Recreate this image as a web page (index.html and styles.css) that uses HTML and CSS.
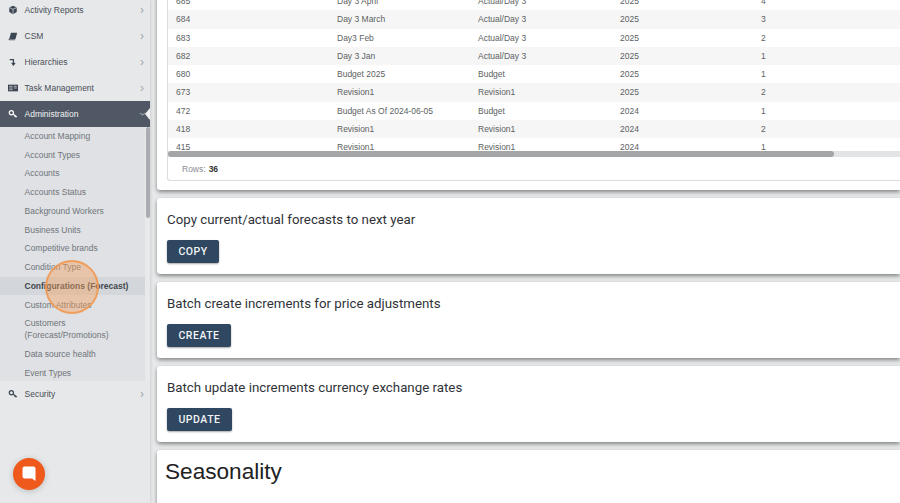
FILE: index.html
```html
<!DOCTYPE html>
<html lang="en">
<head>
    <meta charset="UTF-8">
    <title>Configurations (Forecast)</title>
    <link rel="stylesheet" href="styles.css">
</head>
<body>
    <div class="shell">
        <aside class="sidebar">
            <ul class="menu">
                <li class="menu-item">
                    <svg class="menu-icon" viewBox="0 0 12 12"><path d="M6 1l4.500 2v5.500L6 11 1.500 8.500V3z" fill="#3c4552"/><path d="M1.500 3L6 5.200 10.500 3M6 5.200V11" stroke="#e6e8ea" stroke-width=".8" fill="none"/></svg>
                    <span>Activity Reports</span><span class="chev">&#8250;</span>
                </li>
                <li class="menu-item">
                    <svg class="menu-icon" viewBox="0 0 12 12"><path d="M3.500 2H11L9 9.500H1.500z" fill="#3c4552"/><path d="M1.500 9.500L1 10.500h7.500" stroke="#3c4552" fill="none"/></svg>
                    <span>CSM</span><span class="chev">&#8250;</span>
                </li>
                <li class="menu-item">
                    <svg class="menu-icon" viewBox="0 0 12 12"><path d="M3 3h4.500v5.500M5.500 7l2 2.500 2-2.500" stroke="#3c4552" stroke-width="1.500" fill="none" transform="translate(-1 0)"/></svg>
                    <span>Hierarchies</span><span class="chev">&#8250;</span>
                </li>
                <li class="menu-item">
                    <svg class="menu-icon" viewBox="0 0 12 12"><path d="M0 2h12v8H0z" fill="#3c4552"/><path d="M1.500 4h4M7 4h3.500M1.500 6h4M7 6h3.500M1.500 8h4" stroke="#e6e8ea" stroke-width=".8"/></svg>
                    <span>Task Management</span><span class="chev">&#8250;</span>
                </li>
                <li class="menu-item menu-item-active">
                    <svg class="menu-icon" viewBox="0 0 12 12"><circle cx="4" cy="4.500" r="2.500" fill="none" stroke="#fff" stroke-width="1.400"/><path d="M6 6l4.500 3.500M8.500 8v2" stroke="#fff" stroke-width="1.400" fill="none"/></svg>
                    <span>Administration</span><span class="chev chev-open">&#8250;</span>
                    <span class="active-notch"></span>
                </li>
                <li class="submenu-wrap">
                    <ul class="submenu">
                        <li>Account Mapping</li>
                        <li>Account Types</li>
                        <li>Accounts</li>
                        <li>Accounts Status</li>
                        <li>Background Workers</li>
                        <li>Business Units</li>
                        <li>Competitive brands</li>
                        <li>Condition Type</li>
                        <li class="current">Configurations (Forecast)</li>
                        <li>Custom Attributes</li>
                        <li class="two-lines">Customers (Forecast/Promotions)</li>
                        <li>Data source health</li>
                        <li>Event Types</li>
                    </ul>
                    <span class="submenu-track"><span class="submenu-thumb"></span></span>
                </li>
                <li class="menu-item">
                    <svg class="menu-icon" viewBox="0 0 12 12"><circle cx="4" cy="4.500" r="2.500" fill="none" stroke="#3c4552" stroke-width="1.400"/><path d="M6 6l4.500 3.500M8.500 8v2" stroke="#3c4552" stroke-width="1.400" fill="none"/></svg>
                    <span>Security</span><span class="chev">&#8250;</span>
                </li>
            </ul>
        </aside>

        <main class="content">
            <section class="card card-table">
                <div class="table-box">
                    <div class="table-scroll">
                        <table class="data-table">
                            <tbody>
                                <tr><td>685</td><td>Day 3 April</td><td>Actual/Day 3</td><td>2025</td><td>4</td></tr>
                                <tr><td>684</td><td>Day 3 March</td><td>Actual/Day 3</td><td>2025</td><td>3</td></tr>
                                <tr><td>683</td><td>Day3 Feb</td><td>Actual/Day 3</td><td>2025</td><td>2</td></tr>
                                <tr><td>682</td><td>Day 3 Jan</td><td>Actual/Day 3</td><td>2025</td><td>1</td></tr>
                                <tr><td>680</td><td>Budget 2025</td><td>Budget</td><td>2025</td><td>1</td></tr>
                                <tr><td>673</td><td>Revision1</td><td>Revision1</td><td>2025</td><td>2</td></tr>
                                <tr><td>472</td><td>Budget As Of 2024-06-05</td><td>Budget</td><td>2024</td><td>1</td></tr>
                                <tr><td>418</td><td>Revision1</td><td>Revision1</td><td>2024</td><td>2</td></tr>
                                <tr><td>415</td><td>Revision1</td><td>Revision1</td><td>2024</td><td>1</td></tr>
                            </tbody>
                        </table>
                        <div class="hscroll"><div class="hscroll-thumb"></div></div>
                    </div>
                    <div class="table-footer">Rows: <b>36</b></div>
                </div>
            </section>

            <section class="card">
                <h3 class="card-title">Copy current/actual forecasts to next year</h3>
                <button class="btn">Copy</button>
            </section>
            <section class="card">
                <h3 class="card-title">Batch create increments for price adjustments</h3>
                <button class="btn">Create</button>
            </section>
            <section class="card">
                <h3 class="card-title">Batch update increments currency exchange rates</h3>
                <button class="btn">Update</button>
            </section>
            <section class="card card-last">
                <h2 class="section-title">Seasonality</h2>
            </section>
        </main>

        <div class="click-ring"></div>
        <div class="chat-bubble">
            <svg viewBox="0 0 14 16" width="14" height="16"><path d="M2.500 .5h9a2 2 0 0 1 2 2V15l-3.500-2.500H2.500a2 2 0 0 1-2-2v-8a2 2 0 0 1 2-2z" fill="#fff"/></svg>
        </div>
    </div>
</body>
</html>
```

FILE: styles.css
```css
* {
    margin: 0;
    padding: 0;
    box-sizing: border-box;
}

html, body {
    height: 100%;
    overflow: hidden;
}

body {
    font-family: 'Liberation Sans', Arial, sans-serif;
    background: #e9eaeb;
}

.shell {
    position: relative;
    display: flex;
    height: 503px;
    overflow: hidden;
}

/* sidebar */
.sidebar {
    width: 150px;
    flex-shrink: 0;
    background: #e6e8ea;
    box-shadow: 1px 0 3px rgba(0, 0, 0, 0.12);
    z-index: 1;
}

.menu {
    list-style: none;
    margin-top: -3px;
}

.menu-item {
    position: relative;
    display: flex;
    align-items: center;
    height: 26px;
    padding-left: 8px;
    font-size: 8.500px;
    color: #4a4f57;
}

.menu-icon {
    width: 10px;
    height: 10px;
    margin-right: 6.500px;
    flex-shrink: 0;
}

.chev {
    margin-left: auto;
    margin-right: 6px;
    font-size: 12px;
    color: #a2a6ab;
}

.menu-item-active {
    background: #4f5864;
    color: #f2f3f4;
}

.chev-open {
    transform: rotate(90deg);
    margin-right: 5px;
}

.active-notch {
    position: absolute;
    right: 0;
    top: 7px;
    border-style: solid;
    border-width: 6px 5px 6px 0;
    border-color: transparent #f2f3f4 transparent transparent;
}

.submenu-wrap {
    position: relative;
    background: #dfe1e4;
    height: 254px;
    overflow: hidden;
}

.submenu {
    list-style: none;
    margin-top: -0.500px;
}

.submenu li {
    display: flex;
    align-items: center;
    height: 18.750px;
    padding-left: 24.500px;
    font-size: 8.500px;
    color: #70757b;
}

.submenu li.current {
    background: #d3d6da;
    color: #41464d;
    font-weight: bold;
}

.submenu li.two-lines {
    height: 30.500px;
    padding-right: 20px;
    line-height: 12px;
}

.submenu-track {
    position: absolute;
    top: 0;
    right: 0;
    bottom: 0;
    width: 5px;
    background: #e8e9eb;
}

.submenu-thumb {
    display: block;
    width: 4px;
    height: 91px;
    margin-left: 1px;
    border-radius: 2px;
    background: #a9adb2;
}

/* main column */
.content {
    flex: 1;
    min-width: 0;
    padding-left: 7px;
    margin-top: -20px;
    display: flex;
    flex-direction: column;
    gap: 8px;
}

.card {
    flex-shrink: 0;
    height: 76px;
    padding: 14px 10px 0;
    background: #fff;
    border-radius: 3px 0 0 3px;
    box-shadow: 0 2px 4px rgba(0, 0, 0, 0.45);
}

.card-table {
    height: 210px;
    padding-top: 11px;
}

.card-last {
    height: 80px;
    padding: 8px 8px 0;
}

.card-title {
    font-family: Roboto, sans-serif;
    font-size: 13.300px;
    font-weight: 400;
    line-height: 16px;
    color: #2f3338;
    margin-bottom: 12px;
}

.section-title {
    font-family: 'Liberation Sans', Arial, sans-serif;
    font-size: 22.600px;
    font-weight: 400;
    line-height: 28px;
    color: #222;
}

.btn {
    display: block;
    height: 23px;
    padding: 0 11.500px;
    font-family: Roboto, sans-serif;
    font-size: 10.500px;
    font-weight: 500;
    letter-spacing: 0.5px;
    text-transform: uppercase;
    color: #f3f5f7;
    background: #2f4760;
    border: none;
    border-radius: 2px;
    box-shadow: 0 1px 2px rgba(0, 0, 0, 0.35);
}

/* table */
.table-box {
    border: 1px solid #dcdcdc;
    border-right: none;
    border-radius: 3px 0 0 3px;
    margin-right: -10px;
}

.table-scroll {
    position: relative;
    height: 165px;
    overflow: hidden;
}

.data-table {
    width: 100%;
    table-layout: fixed;
    border-collapse: collapse;
    font-size: 8.500px;
    color: #5c5f63;
}

.data-table tr {
    height: 18.250px;
}

.data-table tr:nth-child(even) {
    background: #f6f6f6;
}

.data-table td {
    padding-left: 8px;
    white-space: nowrap;
}

.data-table td:nth-child(1) { width: 161px; }
.data-table td:nth-child(2) { width: 141px; }
.data-table td:nth-child(3) { width: 142px; }
.data-table td:nth-child(4) { width: 141px; }

.hscroll {
    position: absolute;
    left: 0;
    right: 0;
    bottom: 0;
    height: 6px;
    background: #e3e4e5;
}

.hscroll-thumb {
    width: 666px;
    height: 100%;
    border-radius: 3px;
    background: #a3a5a7;
}

.table-footer {
    display: flex;
    align-items: center;
    gap: 3px;
    height: 23px;
    padding-left: 14px;
    font-size: 8.500px;
    color: #8b8d90;
}

.table-footer b {
    color: #333;
}

/* overlays */
.click-ring {
    position: absolute;
    left: 45px;
    top: 260px;
    width: 54px;
    height: 54px;
    border-radius: 50%;
    border: 2px solid rgba(240, 150, 80, 0.85);
    background: rgba(245, 160, 90, 0.42);
    z-index: 2;
}

.chat-bubble {
    position: absolute;
    left: 13px;
    top: 458px;
    width: 32px;
    height: 32px;
    border-radius: 50%;
    display: flex;
    align-items: center;
    justify-content: center;
    background: #f0591c;
    box-shadow: 0 1px 6px rgba(0, 0, 0, 0.2);
    z-index: 2;
}
```
